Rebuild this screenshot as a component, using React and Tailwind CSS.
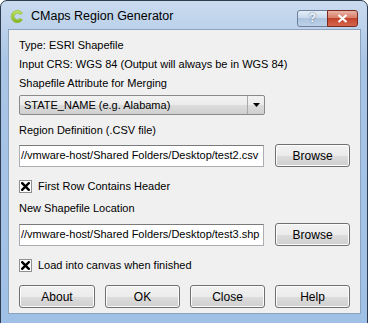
import React from "react";

function Check() {
  return (
    <span className="w-[13px] h-[13px] border border-[#8e8f8f] bg-white flex items-center justify-center shrink-0">
      <svg width="9" height="9" viewBox="0 0 9 9">
        <path d="M1.2 1.2 L7.8 7.8 M7.8 1.2 L1.2 7.8" stroke="#000" strokeWidth="2.4" strokeLinecap="square" />
      </svg>
    </span>
  );
}

function Button({ children, className = "" }) {
  return (
    <div
      className={
        "h-[23px] rounded-[3px] border border-[#707070] bg-[linear-gradient(#f2f2f2_0%,#ebebeb_50%,#dddddd_50%,#cfcfcf_100%)] shadow-[inset_0_0_0_1px_#fcfcfc] flex items-center justify-center text-[12px] " +
        className
      }
    >
      {children}
    </div>
  );
}

function PathField({ value }) {
  return (
    <div className="w-[246px] h-[22px] border border-[#abadb3] border-t-[#7a7a7a] bg-white flex items-center px-[1px] overflow-hidden whitespace-nowrap text-[11px]">
      {value}
    </div>
  );
}

export default function App() {
  return (
    <div className="w-[368px] h-[323px] overflow-hidden bg-white">
      <div
        className="w-[368px] h-[330px] rounded-t-[7px] border border-[#2d3c4f] bg-[linear-gradient(#c9dbef_0px,#bcd1ea_28px,#a9c5e6_60px,#9fc0e6_330px)] flex flex-col"
        style={{ fontFamily: '"Liberation Sans", Arial, sans-serif' }}
      >
        {/* Title bar */}
        <div className="h-[28px] flex items-center pl-[9px] pr-[9px]">
          <svg width="15" height="15" viewBox="0 0 15 15" className="shrink-0 mt-[3px]">
            <defs>
              <linearGradient id="g" x1="0" y1="0" x2="0" y2="1">
                <stop offset="0" stopColor="#c2e36a" />
                <stop offset="1" stopColor="#7fb21c" />
              </linearGradient>
            </defs>
            <path
              d="M12.6 4.2 A6.2 6.2 0 1 0 12.6 10.8 L9.8 9.4 A3.1 3.1 0 1 1 9.8 5.6 Z"
              fill="url(#g)"
              stroke="#8dbb2d"
              strokeWidth="0.6"
            />
          </svg>
          <span className="ml-[6px] mt-[3px] text-[12.5px] text-black">CMaps Region Generator</span>
          <div className="ml-auto flex mt-[6px]">
            <div className="w-[31px] h-[17px] rounded-l-[3px] border border-[#6d7f99] bg-[linear-gradient(#e5eef8_0%,#c9d9ec_45%,#aec4df_50%,#bcd0e8_100%)] flex items-center justify-center">
              <span className="text-[12px] leading-none font-bold text-[#f4f7fb] [text-shadow:0_0_2px_#3d5371]">?</span>
            </div>
            <div className="w-[31px] h-[17px] -ml-px rounded-r-[3px] border border-[#7a2a22] bg-[linear-gradient(#eab4a6_0%,#d87e69_45%,#c2442c_50%,#d4664c_100%)] flex items-center justify-center">
              <svg width="11" height="9" viewBox="0 0 11 9">
                <path d="M1.5 1 L9.5 8 M9.5 1 L1.5 8" stroke="#fff" strokeWidth="2.2" />
              </svg>
            </div>
          </div>
        </div>

        {/* Client area */}
        <div className="ml-[7px] mr-[6px] h-[285px] border border-[#8da2bc] bg-[#f0f0f0] pl-[10px] pr-[10px] pt-[6px] flex flex-col text-[11px] text-black">
          <div className="h-[19px] leading-[19px]">Type: ESRI Shapefile</div>
          <div className="h-[19px] leading-[19px]">Input CRS: WGS 84 (Output will always be in WGS 84)</div>
          <div className="h-[19px] leading-[19px]">Shapefile Attribute for Merging</div>

          <div className="mt-[2px] w-[246px] h-[20px] rounded-[2px] border border-[#8a8a8a] bg-[linear-gradient(#f2f2f2_0%,#ebebeb_50%,#dddddd_50%,#cfcfcf_100%)] flex items-center">
            <span className="pl-[4px] flex-1">STATE_NAME (e.g. Alabama)</span>
            <div className="w-[17px] h-full border-l border-[#a9a9a9] flex items-center justify-center">
              <svg width="7" height="4" viewBox="0 0 7 4">
                <path d="M0 0 L7 0 L3.5 4 Z" fill="#000" />
              </svg>
            </div>
          </div>

          <div className="mt-[6px] h-[19px] leading-[19px]">Region Definition (.CSV file)</div>
          <div className="mt-[4px] flex items-center">
            <PathField value="//vmware-host/Shared Folders/Desktop/test2.csv" />
            <Button className="ml-[11px] w-[75px]">Browse</Button>
          </div>

          <div className="mt-[10px] h-[19px] flex items-center gap-[6px]">
            <Check />
            <span>First Row Contains Header</span>
          </div>
          <div className="mt-[3px] h-[19px] leading-[19px]">New Shapefile Location</div>
          <div className="mt-[5px] flex items-center">
            <PathField value="//vmware-host/Shared Folders/Desktop/test3.shp" />
            <Button className="ml-[11px] w-[75px]">Browse</Button>
          </div>

          <div className="mt-[10px] h-[19px] flex items-center gap-[6px]">
            <Check />
            <span>Load into canvas when finished</span>
          </div>

          <div className="mt-[10px] flex gap-[10px]">
            <Button className="w-[76px]">About</Button>
            <Button className="w-[75px]">OK</Button>
            <Button className="w-[75px]">Close</Button>
            <Button className="w-[75px]">Help</Button>
          </div>
        </div>
      </div>
    </div>
  );
}
